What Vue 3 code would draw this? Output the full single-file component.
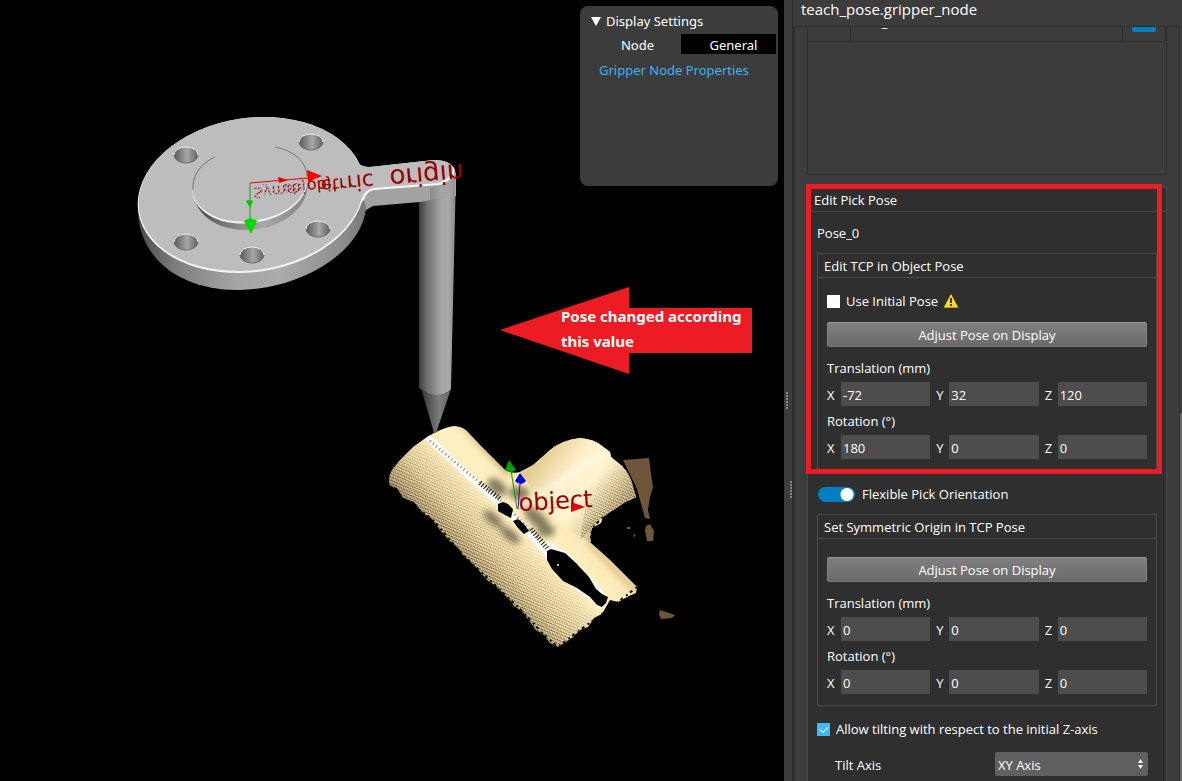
<script setup>
import { ref, reactive } from 'vue'

const tcp = reactive([
  { key: 'tcp-t', title: 'Translation (mm)', axes: [['X', '-72'], ['Y', '32'], ['Z', '120']] },
  { key: 'tcp-r', title: 'Rotation (°)', axes: [['X', '180'], ['Y', '0'], ['Z', '0']] }
])
const origin = reactive([
  { key: 'org-t', title: 'Translation (mm)', axes: [['X', '0'], ['Y', '0'], ['Z', '0']] },
  { key: 'org-r', title: 'Rotation (°)', axes: [['X', '0'], ['Y', '0'], ['Z', '0']] }
])
const useInitial = ref(false)
const flexible = ref(true)
const allowTilt = ref(true)
const tiltAxis = ref('XY Axis')

const holes = [[186, 155], [311, 142], [318, 229], [186, 242], [252, 255]]
</script>

<template>
  <div class="app">
    <main class="view">
      <svg class="scene" viewBox="0 0 784 781" preserveAspectRatio="xMinYMin meet" role="img" aria-label="Gripper and object">
        <defs>
          <linearGradient id="side" x1="138" x2="366" y1="0" y2="0" gradientUnits="userSpaceOnUse">
            <stop offset="0" stop-color="#4a4a4a" /><stop offset=".16" stop-color="#7c7c7c" />
            <stop offset=".42" stop-color="#a4a4a4" /><stop offset=".62" stop-color="#ababab" />
            <stop offset=".9" stop-color="#8c8c8c" /><stop offset="1" stop-color="#777" />
          </linearGradient>
          <linearGradient id="rim" x1="193" x2="308" y1="0" y2="0" gradientUnits="userSpaceOnUse">
            <stop offset="0" stop-color="#2a2a2a" /><stop offset=".2" stop-color="#6c6c6c" />
            <stop offset=".6" stop-color="#a8a8a8" /><stop offset="1" stop-color="#858585" />
          </linearGradient>
          <linearGradient id="post" x1="419" x2="456" y1="0" y2="0" gradientUnits="userSpaceOnUse">
            <stop offset="0" stop-color="#3c3c3c" /><stop offset=".2" stop-color="#6c6c6c" />
            <stop offset=".6" stop-color="#a6a6a6" /><stop offset=".8" stop-color="#a8a8a8" />
            <stop offset="1" stop-color="#858585" />
          </linearGradient>
          <linearGradient id="cone" x1="421" x2="451" y1="0" y2="0" gradientUnits="userSpaceOnUse">
            <stop offset="0" stop-color="#333" /><stop offset=".6" stop-color="#7c7c7c" /><stop offset="1" stop-color="#666" />
          </linearGradient>
          <linearGradient id="hole" x1="0" x2="1" y1="0" y2="0">
            <stop offset="0" stop-color="#585858" /><stop offset=".55" stop-color="#a8a8a8" /><stop offset="1" stop-color="#606060" />
          </linearGradient>
          <linearGradient id="cream" x1="540" y1="480" x2="452" y2="560" gradientUnits="userSpaceOnUse">
            <stop offset="0" stop-color="#fbe9b4" /><stop offset=".35" stop-color="#fff0c4" />
            <stop offset=".7" stop-color="#f0dca6" /><stop offset=".9" stop-color="#c9b588" /><stop offset="1" stop-color="#a08a62" />
          </linearGradient>
          <linearGradient id="branch" x1="535" y1="465" x2="612" y2="520" gradientUnits="userSpaceOnUse">
            <stop offset="0" stop-color="#e3cd94" /><stop offset=".35" stop-color="#fff1cc" />
            <stop offset=".6" stop-color="#fff3cd" /><stop offset="1" stop-color="#d3bd8a" />
          </linearGradient>
          <linearGradient id="fade" x1="500" y1="510" x2="452" y2="558" gradientUnits="userSpaceOnUse">
            <stop offset="0" stop-color="#000" /><stop offset=".5" stop-color="#666" /><stop offset="1" stop-color="#ddd" />
          </linearGradient>
          <linearGradient id="fade2" x1="600" y1="478" x2="624" y2="505" gradientUnits="userSpaceOnUse">
            <stop offset="0" stop-color="#000" /><stop offset="1" stop-color="#aaa" />
          </linearGradient>
          <mask id="lower"><rect x="380" y="420" width="270" height="240" fill="url(#fade)" /></mask>
          <mask id="edge"><rect x="380" y="420" width="270" height="240" fill="url(#fade2)" /></mask>
          <pattern id="grain" width="3" height="3" patternUnits="userSpaceOnUse" patternTransform="rotate(24)">
            <rect width="2" height="1" fill="#2a2210" /><rect x="2" y="1" width="1" height="1" fill="#5d4f30" />
          </pattern>
          <pattern id="speck" width="5" height="4" patternUnits="userSpaceOnUse">
            <rect width="3" height="1" fill="#970000" /><rect x="2" y="1" width="2" height="1" fill="#970000" /><rect x="0" y="2" width="1" height="2" fill="#970000" /><rect x="3" y="3" width="2" height="1" fill="#970000" />
          </pattern>
          <filter id="soft" x="-50%" y="-50%" width="200%" height="200%"><feGaussianBlur stdDeviation="3" /></filter>
          <clipPath id="body"><path d="M427 437 434 433Q448 426 455 426Q463 427 467 431L480 445 497 462 505 470Q512 474 520 472L533 465 550 450Q562 440 580 438Q594 439 602 446L610 452 611 457 622 466Q631 476 633 487L636 497 630 500 625 502 618 507 610 512 603 517 601 523 592 528 590 537 591 543 610 560 637 587 636 593 629 596 618 602 610 600 602 614 594 618 588 627 580 630 572 638 558 647 550 643 543 634 536 630 523 612 514 606 509 599 497 587 487 580 477 568 463 555 459 549 450 541 440 530 432 519 423 513 414 502 403 498 397 488 390 486Q387 478 392 470L400 460 413 447Z" /></clipPath>
        </defs>

        <!-- background fragments -->
        <path d="M623 460 649 458 651 474 653 487 650 497 648 510 650 519 645 518 637 489Z" fill="#6f563a" />
        <path d="M646 526 650 524 654 531 653 541 647 541 645 530ZM627 527h3v2h-3ZM633 533l3 3-2 1ZM660 610 669 613 675 615 672 618 661 619 659 614Z" fill="#6f563a" />

        <!-- scanned pipe -->
        <g clip-path="url(#body)">
          <rect x="380" y="420" width="270" height="240" fill="url(#cream)" />
          <path d="M520 472 533 465 550 450 562 436H612L640 480V500L603 517 592 528 591 543 556 521Z" fill="url(#branch)" />
          <path d="M530 500 609 451" stroke="#fffdf2" stroke-width="4" opacity=".8" filter="url(#soft)" />
          <path d="M592 522 591 544 640 595" fill="none" stroke="#c9a562" stroke-width="7" opacity=".5" filter="url(#soft)" />
          <path d="M463 422 510 474" stroke="#b3924f" stroke-width="7" opacity=".7" filter="url(#soft)" />
          <g fill="#4d462f" opacity=".68" filter="url(#soft)">
            <ellipse cx="497" cy="487" rx="11" ry="7" transform="rotate(40 497 487)" />
            <ellipse cx="537" cy="519" rx="16" ry="7" transform="rotate(42 537 519)" />
            <ellipse cx="546" cy="531" rx="9" ry="6" />
            <ellipse cx="493" cy="519" rx="12" ry="5" transform="rotate(42 493 519)" />
            <ellipse cx="510" cy="535" rx="12" ry="5" transform="rotate(40 510 535)" />
            <ellipse cx="519" cy="493" rx="10" ry="7" />
          </g>
          <rect x="380" y="420" width="270" height="240" fill="url(#grain)" mask="url(#lower)" />
          <path d="M595 450H640V505L600 520 580 540Z" fill="url(#grain)" mask="url(#edge)" />
          <path d="M427 437 470 477 500 503 540 544 570 580 604 606" fill="none" stroke="#fff" stroke-width="7" />
          <path d="M546 543 567 556 585 575 606 599" fill="none" stroke="#fff" stroke-width="5" />
          <path d="M430 441 462 468 492 492 540 540" fill="none" stroke="#8d8468" stroke-width="3" stroke-dasharray="1 3" />
          <path d="M480 483 500 499M531 529 547 548" fill="none" stroke="#17120a" stroke-width="5" stroke-dasharray="1 2" />
          <path d="M603 517 592 528 591 543M637 587 618 602 602 614 580 630 558 647 543 634 523 612 497 587 463 555 432 519 403 498 390 486" fill="none" stroke="#000" stroke-width="2" stroke-dasharray="2 4 3 3" />
        </g>
        <path d="M498 504 503 502 508 504 513 509 511 518 505 515 498 511ZM513 521 518 519 524 524 529 531 524 534 518 528Z" />
        <path d="M547 551 551 549 565 553 576 563 589 577 596 589 602 594 608 597 606 603 602 607 597 605 590 597 577 588 563 581 552 569 547 560Z" />
        <circle cx="558" cy="565" r="1" fill="#fff" />

        <!-- gripper -->
        <path d="M419 200V388Q428 396 437 395 446 395 451 389L456 174 440 184Z" fill="url(#post)" />
        <path d="M421 388Q428 395 436 395 446 395 451 389L436 433H434Z" fill="url(#cone)" />
        <path d="M366 190 372 187 440 182 456 172V196L420 202 373 206 366 210 355 222V200Z" fill="#a2a2a2" />
        <path d="M430 188 440 185Q452 180 455 174V202H430Z" fill="url(#post)" opacity=".55" />
        <path d="M138 206V213C140 258 180 291 240 290 306 288 362 250 366 208L360 186 150 196Z" fill="url(#side)" />
        <ellipse cx="251" cy="195" rx="114" ry="77" transform="rotate(-8.5 251 195)" fill="#f4f4f4" />
        <path d="M355 162Q362 168 370 167L434 160Q451 160 455 170 455 179 440 185L374 190Q367 191 364 200L350 214Z" fill="#f4f4f4" />
        <ellipse cx="251" cy="194" rx="113" ry="76" transform="rotate(-8.5 251 194)" fill="#bdbdbd" />
        <path d="M350 158Q361 167 370 167L434 160Q450 160 453 168 453 177 438 183L373 188Q365 190 362 198L345 210Z" fill="#bdbdbd" />

        <path d="M193 187C192 211 214 231 247 230 281 229 308 210 308 182L300 170H200Z" fill="url(#rim)" />
        <ellipse cx="250" cy="185" rx="58" ry="38" transform="rotate(-8.5 250 185)" fill="#f4f4f4" />
        <ellipse cx="250" cy="183" rx="58" ry="38" transform="rotate(-8.5 250 183)" fill="#bdbdbd" />
        <path d="M193 190C192 174 202 163 215 157M275 147C295 151 306 162 307 176" fill="none" stroke="#777" />
        <g v-for="h in holes" :key="h[0] + '-' + h[1]">
          <ellipse :cx="h[0]" :cy="h[1]" rx="12" ry="8" fill="url(#hole)" />
          <path :d="`M${h[0] - 12} ${h[1]}a12 8 0 0 1 24 0`" fill="none" stroke="#eee" />
          <path :d="`M${h[0] - 12} ${h[1]}a12 8 0 0 0 24 0`" fill="none" stroke="#6b6b6b" />
        </g>

        <!-- mirrored frame label, partly buried in the flange -->
        <g transform="translate(252 177) rotate(-5) scale(1 -1)" class="frame-text">
          <text x="0" y="-11" font-size="15" class="buried">Symm</text>
          <text x="30" y="-10" font-size="15" class="buried">obj</text>
          <text x="54" y="-9" font-size="16">obj</text>
          <text x="68" y="-9" font-size="18">etr</text>
          <text x="94" y="-7" font-size="22">ric</text>
          <text x="137" y="-5" font-size="26">origin</text>
        </g>
        <path d="M250 183 308 178" stroke="#e00000" /><path d="M278 177 288 180 279 183Z" fill="#e00000" />
        <path d="M307 170 322 176 308 182Z" fill="#f20000" />
        <path d="M250 183V225" stroke="#129a12" />
        <path d="M246 201Q250 199 253 201L250 208Z" fill="#00c800" />
        <path d="M244 221Q250 216 257 221L251 234Z" fill="#00dc00" />

        <!-- object frame -->
        <path d="M517 509 511 470" stroke="#1e8a1e" /><path d="M509 460 516 470Q511 474 505 470Z" fill="#00a000" />
        <path d="M518 509 520 484" stroke="#2222a0" /><path d="M520 473 526 481Q521 487 515 481Z" fill="#0000d8" />
        <path d="M518 509 572 507" stroke="#e0a58c" />
        <text x="519" y="511" font-size="24" transform="rotate(-3 519 511)" class="frame-text">object</text>
        <path d="M571 502 585 507 571 512Z" fill="#e80000" />

        <!-- callout -->
        <path d="M500 330 629 287V308H752V353H629V374Z" fill="#ed1c24" />
        <text class="callout" x="561" y="322">Pose changed according</text>
        <text class="callout" x="561" y="347">this value</text>
      </svg>

      <section class="display">
        <h2><svg width="10" height="9" viewBox="0 0 10 9" aria-hidden="true"><path d="M0 0H10L5 9Z" fill="#fff" /></svg>Display Settings</h2>
        <div class="tabs">
          <button type="button">Node</button>
          <button type="button" class="on">General</button>
        </div>
        <a href="#gripper">Gripper Node Properties</a>
      </section>
    </main>

    <div class="splitter" aria-hidden="true"><i></i><i></i></div>

    <aside class="panel">
      <h1>teach_pose.gripper_node</h1>
      <div class="body">
        <div class="content">
          <div class="list">
            <table>
              <tbody>
                <tr><td class="c1"></td><td>Pose_0</td><td class="c3"><button type="button" class="blue" aria-label="Edit pose"></button></td></tr>
              </tbody>
            </table>
          </div>

          <section class="group outer">
            <div class="marked">
              <h2>Edit Pick Pose</h2>
              <p class="pose">Pose_0</p>
              <section class="group inner">
                <h3>Edit TCP in Object Pose</h3>
                <div class="fields">
                  <label class="check">
                    <input v-model="useInitial" type="checkbox">Use Initial Pose
                    <svg width="14" height="14" viewBox="0 0 14 14" aria-hidden="true"><path d="M7 0 14 13V14H0V13Z" fill="#fadb1e" /><path d="M0 13H14V14H0Z" fill="#b59c12" /><path d="M6 4H8V9H6ZM6 10H8V12H6Z" fill="#333" /></svg>
                  </label>
                  <button type="button" class="adjust">Adjust Pose on Display</button>
                  <div v-for="g in tcp" :key="g.key" class="vector">
                    <p>{{ g.title }}</p>
                    <div class="axes">
                      <template v-for="a in g.axes" :key="a[0]">
                        <label :for="g.key + a[0]">{{ a[0] }}</label>
                        <input :id="g.key + a[0]" v-model="a[1]" type="text">
                      </template>
                    </div>
                  </div>
                </div>
              </section>
              <div class="highlight"></div>
            </div>

            <label class="toggle"><input v-model="flexible" type="checkbox" role="switch">Flexible Pick Orientation</label>

            <section class="group inner">
              <h3>Set Symmetric Origin in TCP Pose</h3>
              <div class="fields">
                <button type="button" class="adjust">Adjust Pose on Display</button>
                <div v-for="g in origin" :key="g.key" class="vector">
                  <p>{{ g.title }}</p>
                  <div class="axes">
                    <template v-for="a in g.axes" :key="a[0]">
                      <label :for="g.key + a[0]">{{ a[0] }}</label>
                      <input :id="g.key + a[0]" v-model="a[1]" type="text">
                    </template>
                  </div>
                </div>
              </div>
            </section>

            <label class="check tilt"><input v-model="allowTilt" type="checkbox">Allow tilting with respect to the initial Z-axis</label>
            <div class="row">
              <label for="axis">Tilt Axis</label>
              <div class="select">
                <select id="axis" v-model="tiltAxis"><option>XY Axis</option><option>X Axis</option><option>Y Axis</option></select>
                <svg width="5" height="10" viewBox="0 0 5 10" aria-hidden="true"><path d="M0 4 2.500 0 5 4ZM0 6H5L2.500 10Z" fill="#fff" /></svg>
              </div>
            </div>
          </section>
        </div>
        <div class="scroll" aria-hidden="true"></div>
      </div>
    </aside>
  </div>
</template>

<style>
body { background: #000; }
</style>

<style scoped>
* { box-sizing: border-box; }
.app { display: grid; grid-template-columns: minmax(0, 1fr) 8px 390px; height: 100vh; overflow: hidden; background: #3c3c3c; color: #fff; font: 13px/18px "Noto Sans", "Open Sans", sans-serif; }
h1, h2, h3, p { margin: 0; font-weight: 400; font-size: 13px; }
button, input, select { font: inherit; color: inherit; border: 0; margin: 0; padding: 0; }

.view { position: relative; background: #000; overflow: hidden; }
.scene { display: block; width: 100%; height: 100%; }
.frame-text { font-family: "DejaVu Sans", sans-serif; fill: #970000; }
.buried { fill: url(#speck); }
.callout { font-family: "Noto Sans", sans-serif; font-size: 15px; font-weight: 700; fill: #fff; }
.display { position: absolute; top: 6px; right: 6px; width: 198px; height: 180px; padding: 6px 2px; border-radius: 8px; background: #3c3c3c; }
.display h2 { display: flex; align-items: center; gap: 5px; padding-left: 9px; }
.tabs { display: flex; margin: 4px 0 7px; }
.tabs button { flex: 1; height: 20px; background: none; padding: 2px 0 0 12px; }
.tabs button + button { flex: 0 0 95px; padding-left: 10px; }
.tabs .on { background: #000; }
.display a { display: block; padding-left: 17px; color: #3db4f5; text-decoration: none; }

.splitter { display: flex; flex-direction: column; gap: 71px; padding: 392px 0 0 2px; background: #3c3c3c; }
.splitter i { width: 2px; height: 18px; background: repeating-linear-gradient(#888 0 2px, transparent 2px 3px); }
.splitter i + i { align-self: flex-end; }

.panel { display: flex; flex-direction: column; min-width: 0; border-left: 1px solid #2d2d2d; font-family: "Open Sans", "Noto Sans", sans-serif; }
.panel h1 { flex: none; height: 27px; padding-left: 8px; border-bottom: 1px solid #2d2d2d; font-size: 15px; line-height: 18px; }
.body { flex: 1; min-height: 0; display: flex; border-left: 2px solid #2f2f2f; overflow: hidden; }
.content { flex: 1; min-width: 0; padding: 0 12px; border-right: 1px solid #303030; }
.scroll { width: 2px; margin-top: 386px; background: #6a6a6a; border-radius: 2px 0 0 0; }
.list { height: 148px; border: 1px solid #2d2d2d; border-top: 0; overflow: hidden; }
table { width: 100%; margin-top: -27px; border-collapse: collapse; }
td { height: 41px; padding: 2px 2px 0; border: 1px solid #2d2d2d; border-left: 0; }
.c1 { width: 42px; }
.c3 { width: 43px; padding: 0 0 0 9px; }
.blue { display: block; width: 24px; height: 22px; border-radius: 2px; background: #007fc2; }

.group { border: 1px solid #4a4a4a; background: #2f2f2f; }
.outer { margin-top: 12px; height: 700px; }
.outer h2 { height: 24px; line-height: 24px; padding-left: 6px; border-bottom: 1px solid #4a4a4a; }
.marked { position: relative; }
.highlight { position: absolute; top: -4px; right: 4px; bottom: -3px; left: -2px; border: 5px solid #ed1c24; pointer-events: none; }
.pose { margin: 12px 0 11px 9px; }
.inner { margin: 0 9px; }
.inner h3 { height: 24px; line-height: 24px; padding-left: 6px; border-bottom: 1px solid #4a4a4a; }
.fields { padding: 14px 9px 11px; }
.check { display: flex; align-items: center; gap: 6px; }
.check input { appearance: none; display: grid; place-items: center; width: 13px; height: 13px; background: #fff; }
.check input:checked { background: #3db9ff; }
.check input:checked::after { content: ""; width: 7px; height: 4px; margin-bottom: 2px; border: solid #fff; border-width: 0 0 1px 1px; transform: rotate(-45deg); }
.adjust { display: block; width: 100%; height: 25px; border: 1px solid #8c8c8c; border-color: #969696 #858585 #777; border-radius: 2px; background: linear-gradient(#808080, #6a6a6a); }
.fields .check + .adjust { margin-top: 12px; }
.fields .adjust:first-child { margin-top: 4px; }
.fields .vector { margin-top: 12px; }
.fields .vector + .vector { margin-top: 6px; }
.axes { display: grid; grid-template-columns: 14px 1fr 19px 1fr 19px 1fr; align-items: center; margin-top: 5px; }
.axes label { padding-top: 2px; }
.axes label:not(:first-child) { padding-left: 6px; }
.axes input { width: 100%; height: 24px; padding: 2px 2px 0; background: #4d4d4d; }
.toggle { display: flex; align-items: center; gap: 7px; margin: 14px 0 11px 10px; }
.toggle input { appearance: none; width: 37px; height: 15px; border-radius: 8px; background: radial-gradient(circle at 29px 50%, #fff 6px, transparent 7px), #007fc2; }
.tilt { margin: 14px 0 14px 9px; }
.row { display: flex; align-items: center; justify-content: space-between; padding: 0 18px 0 27px; }
.row label { padding-top: 2px; }
.select { position: relative; width: 153px; }
select { appearance: none; display: block; width: 100%; height: 24px; padding: 2px 3px 0; border-radius: 2px; background: #606060; }
.select svg { position: absolute; right: 5px; top: 7px; }
</style>
